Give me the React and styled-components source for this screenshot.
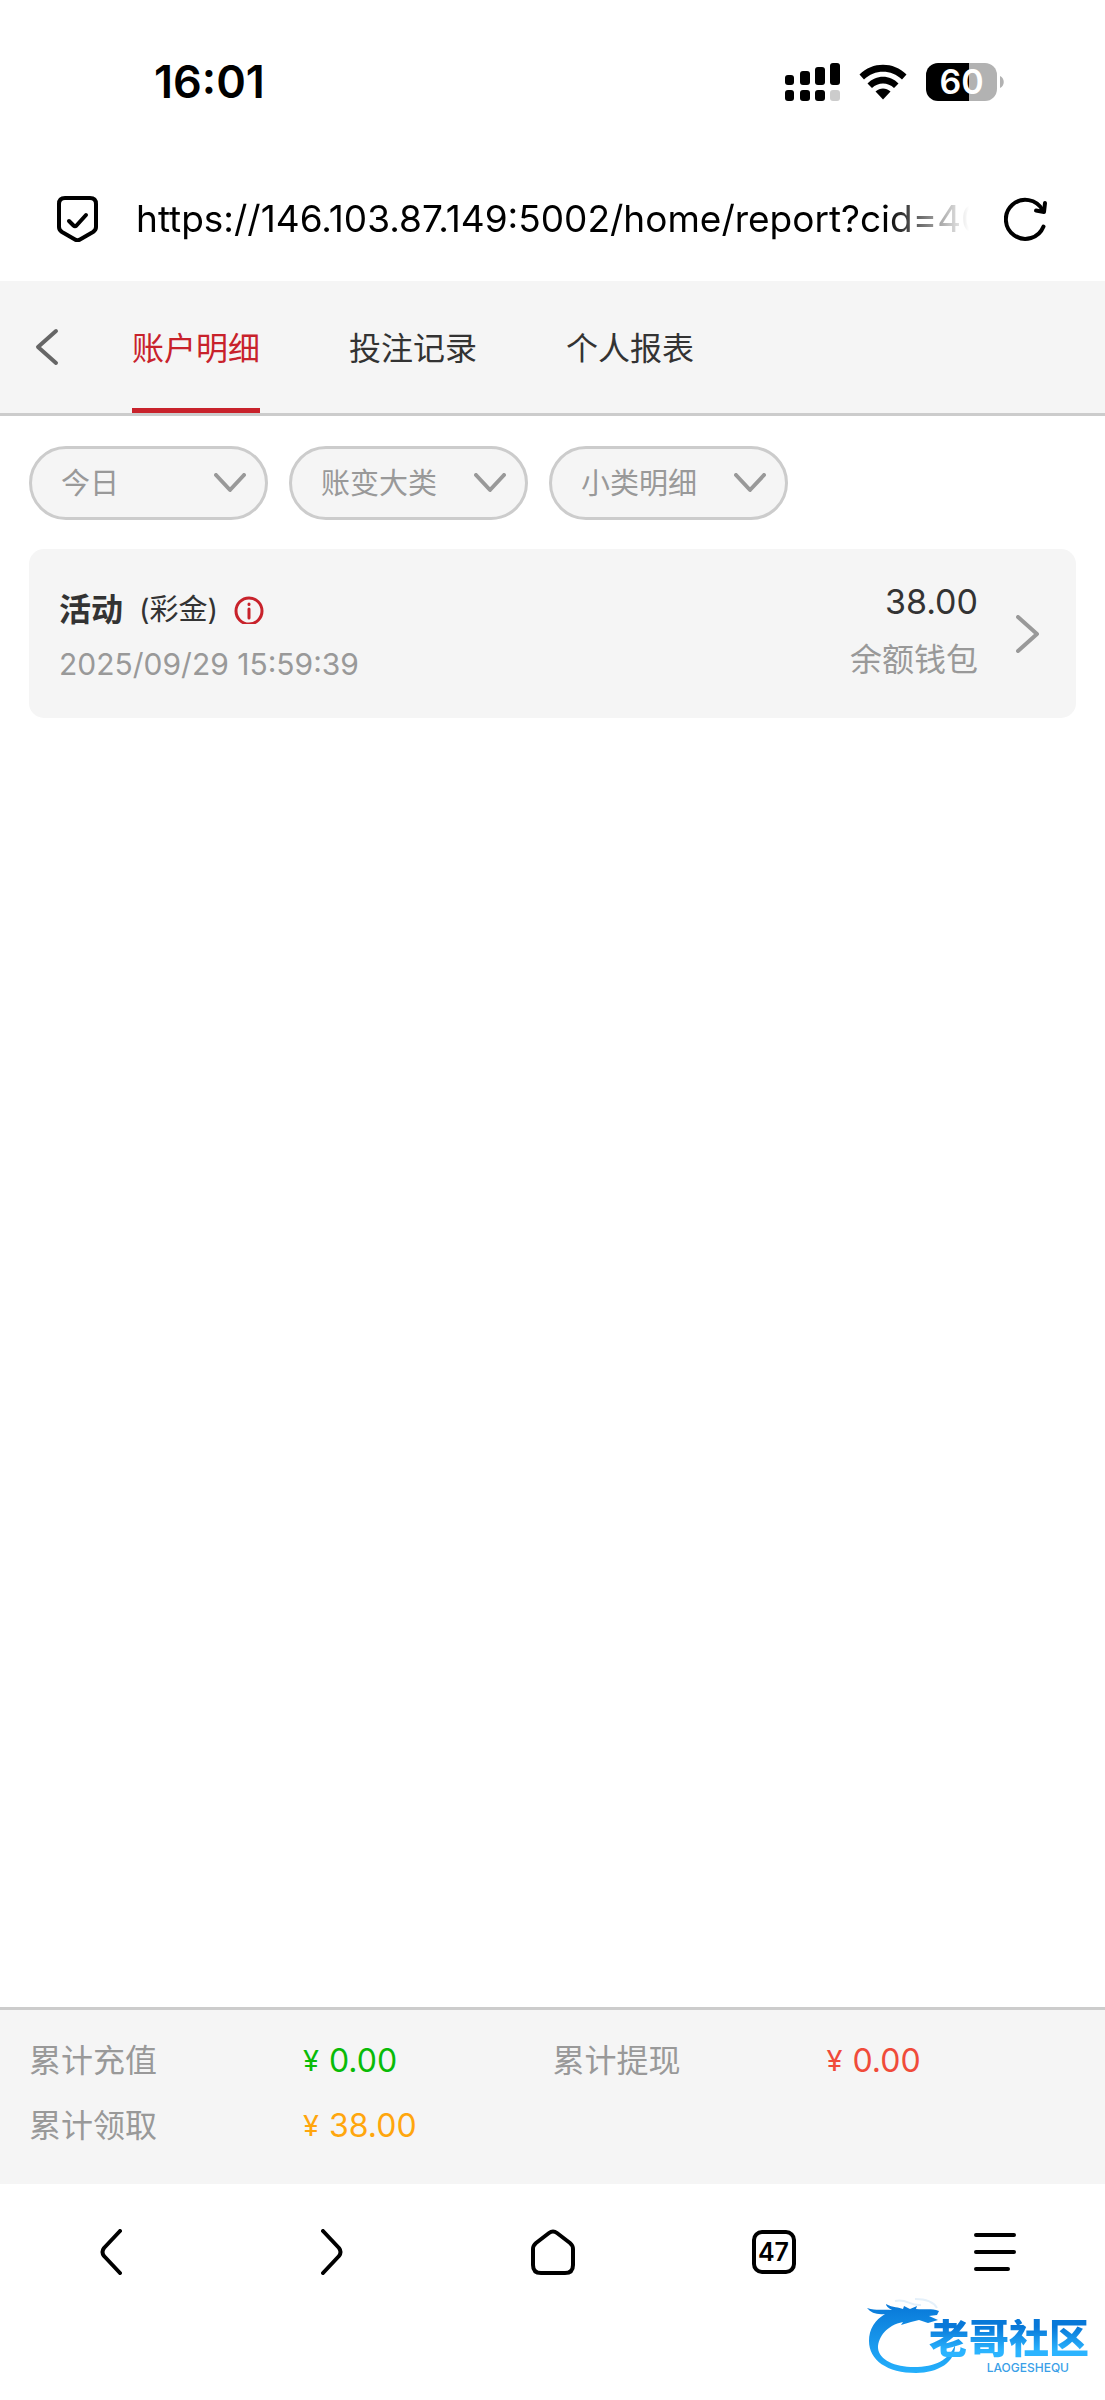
import React from 'react';
import styled, { createGlobalStyle } from 'styled-components';

const GlobalStyle = createGlobalStyle`
  * {
    box-sizing: border-box;
  }

  body {
    margin: 0;
    background: #fff;
    font-family: Inter, 'Noto Sans CJK SC', sans-serif;
  }

  button,
  input,
  select {
    font: inherit;
    color: inherit;
  }
`;

const Page = styled.div`
  display: flex;
  flex-direction: column;
  min-height: 100vh;
`;

const StatusBar = styled.div`
  display: flex;
  align-items: center;
  justify-content: space-between;
  height: 164px;
  padding: 0 101px 0 154px;
`;

const Clock = styled.time`
  font-size: 45px;
  font-weight: 600;
  line-height: 56px;
`;

const StatusIcons = styled.div`
  display: flex;
  align-items: center;
  gap: 19px;
`;

const Battery = styled.div`
  display: flex;
  align-items: center;
  gap: 3px;
`;

const BatteryBody = styled.div`
  width: 71px;
  height: 38px;
  border-radius: 12px;
  background: linear-gradient(to right, #000 60%, #b2b2b2 60%);
  color: #fff;
  font-size: 34px;
  font-weight: 600;
  line-height: 38px;
  text-align: center;
`;

const AddressBar = styled.div`
  display: flex;
  align-items: center;
  height: 109px;
  padding: 0 57px 0 56px;
  margin-bottom: 8px;
`;

const AddressInput = styled.input`
  flex: 1;
  min-width: 0;
  height: 56px;
  margin: 0 35px 0 37px;
  padding: 0;
  border: 0;
  outline: 0;
  background: none;
  color: #000;
  font-size: 37px;
  mask-image: linear-gradient(to right, #000 calc(100% - 84px), transparent);
`;

const IconButton = styled.button`
  display: flex;
  align-items: center;
  justify-content: center;
  padding: 0;
  border: 0;
  background: none;
  color: ${({ $color }) => $color || '#000'};
`;

const Header = styled.header`
  display: flex;
  height: 135px;
  padding-left: 32px;
  background: #f5f5f5;
  border-bottom: 3px solid #ccc;
`;

const Tabs = styled.nav`
  display: flex;
  gap: 89px;
  margin-left: 72px;
`;

const Tab = styled.a`
  display: flex;
  align-items: center;
  border-top: 8px solid transparent;
  border-bottom: 5px solid ${({ $active }) => ($active ? '#c8222b' : 'transparent')};
  color: ${({ $active }) => ($active ? '#c8222b' : '#333')};
  font-size: 32px;
  line-height: 48px;
  text-decoration: none;
`;

const Main = styled.main`
  flex: 1;
  padding: 30px 29px;
`;

const Filters = styled.div`
  display: flex;
  gap: 21px;
  margin-bottom: 29px;
`;

const Filter = styled.label`
  position: relative;
  display: block;
  width: 239px;
  color: #999;

  svg {
    position: absolute;
    top: 27px;
    right: 22px;
    pointer-events: none;
  }
`;

const FilterSelect = styled.select`
  appearance: none;
  width: 100%;
  height: 74px;
  padding: 0 60px 0 29px;
  border: 3px solid #ccc;
  border-radius: 37px;
  background: #f5f5f5;
  font-size: 29px;
`;

const Record = styled.article`
  display: flex;
  align-items: center;
  height: 169px;
  padding: 0 36px 0 30px;
  border-radius: 15px;
  background: #f5f5f5;
  color: #333;
`;

const RecordInfo = styled.div`
  flex: 1;
  padding-top: 4px;
`;

const RecordTitle = styled.div`
  display: flex;
  align-items: center;
  gap: 16px;
  font-size: 29px;
  line-height: 56px;

  strong {
    font-size: 32px;
    font-weight: 700;
  }
`;

const RecordTime = styled.time`
  display: block;
  color: #999;
  font-size: 30px;
  line-height: 52px;
`;

const RecordAmount = styled.div`
  margin-right: 38px;
  padding-bottom: 6px;
  text-align: right;
  font-size: 34px;
  line-height: 58px;
`;

const Wallet = styled.div`
  color: #999;
  font-size: 32px;
`;

const Totals = styled.footer`
  height: 177px;
  padding: 18px 29px;
  background: #f5f5f5;
  border-top: 3px solid #ccc;
`;

const TotalsList = styled.dl`
  display: grid;
  grid-template-columns: 1fr 1fr;
  margin: 0;
  font-size: 32px;
  line-height: 65px;
`;

const Total = styled.div`
  display: flex;

  dt {
    width: 274px;
    color: #999;
  }

  dd {
    display: flex;
    gap: 10px;
    margin: 0;
    color: ${({ $color }) => $color};
  }
`;

const Currency = styled.span`
  font-size: 29px;
`;

const BottomNav = styled.nav`
  display: grid;
  grid-template-columns: repeat(5, 1fr);
  height: 216px;
  padding-bottom: 80px;
`;

const TabCount = styled.span`
  display: block;
  width: 44px;
  height: 44px;
  border: 4px solid #000;
  border-radius: 10px;
  font-size: 25px;
  font-weight: 600;
  line-height: 36px;
  text-align: center;
`;

const Watermark = styled.div`
  position: absolute;
  right: 16px;
  bottom: 25px;
  width: 224px;
  height: 80px;
  pointer-events: none;

  svg {
    position: absolute;
    inset: 0;
  }
`;

const WatermarkName = styled.div`
  position: absolute;
  top: 24px;
  right: 0;
  background: linear-gradient(#0878d8 20%, #2bb4ff 80%);
  background-clip: text;
  color: transparent;
  font-size: 40px;
  font-weight: 900;
  line-height: 40px;
`;

const WatermarkLatin = styled.div`
  position: absolute;
  right: 20px;
  bottom: 0;
  color: #3a9fe8;
  font-size: 12px;
  font-weight: 500;
  line-height: 14px;
`;

const Stroke = ({ width, height, weight, children }) => (
  <svg
    width={width}
    height={height}
    viewBox={`0 0 ${width} ${height}`}
    fill="none"
    stroke="currentColor"
    strokeWidth={weight}
    strokeLinecap="round"
    strokeLinejoin="round"
    aria-hidden="true"
  >
    {children}
  </svg>
);

const SignalIcon = () => (
  <svg width="55" height="38" viewBox="0 0 55 38" aria-hidden="true">
    <rect x="0" y="12" width="9" height="10" rx="3" />
    <rect x="15" y="8" width="10" height="14" rx="3" />
    <rect x="30" y="4" width="10" height="18" rx="3" />
    <rect x="45" y="0" width="10" height="22" rx="3" />
    <rect x="0" y="27" width="9" height="11" rx="3" />
    <rect x="15" y="27" width="10" height="11" rx="3" />
    <rect x="30" y="27" width="10" height="11" rx="3" />
    <rect x="45" y="27" width="10" height="11" rx="3" fill="#ccc" />
  </svg>
);

const WifiIcon = () => (
  <svg width="48" height="36" viewBox="0 0 48 36" aria-hidden="true">
    <path d="M0.5 10.5C13.5 -2.5 34.5 -2.5 47.5 10.5L43 15.5C32.5 5 15.5 5 5 15.5Z" />
    <path d="M8.5 19.5C17 10.5 31 10.5 39.5 19.5L35 24C29 18 19 18 13 24Z" />
    <path d="M16.5 27.5C21 23.5 27 23.5 31.5 27.5L24 35.5Z" />
  </svg>
);

const Dragon = () => (
  <svg width="224" height="80" viewBox="0 0 224 80" aria-hidden="true">
    <defs>
      <linearGradient id="dragon" x1="0" y1="0" x2="0" y2="1">
        <stop offset="0" stopColor="#0878d8" />
        <stop offset="1" stopColor="#25b0fc" />
      </linearGradient>
    </defs>
    <path
      fill="url(#dragon)"
      d="M2 13C12 16 17 14 27 15C23 13 21 11 21 9C28 13 34 12 38 14L39 11L45 14L52 11L51 14C60 15 66 13 74 16L72 20L64 21L73 25L63 28L54 25L46 27L36 30L38 27C22 30 13 42 13 53C14 65 30 72 49 72C70 72 84 65 90 50C91 67 73 78 51 78C22 78 4 65 4 46C4 34 10 25 20 19C12 20 6 18 2 13Z"
    />
    <path
      fill="none"
      stroke="#e4f0fa"
      strokeWidth="2"
      d="M30 6C42 3 44 11 56 10M50 4C60 4 68 6 72 13"
    />
  </svg>
);

const tabs = ['账户明细', '投注记录', '个人报表'];

const filters = ['今日', '账变大类', '小类明细'];

const totals = [
  { label: '累计充值', value: '0.00', color: '#09bb07' },
  { label: '累计提现', value: '0.00', color: '#f04b3a' },
  { label: '累计领取', value: '38.00', color: '#ffa60d' },
];

const App = () => (
  <>
    <GlobalStyle />
    <Page>
      <StatusBar>
        <Clock>16:01</Clock>
        <StatusIcons>
          <SignalIcon />
          <WifiIcon />
          <Battery>
            <BatteryBody>60</BatteryBody>
            <svg width="4" height="12" viewBox="0 0 4 12" aria-hidden="true">
              <path d="M0 0C5 2 5 10 0 12Z" fill="#b2b2b2" />
            </svg>
          </Battery>
        </StatusIcons>
      </StatusBar>

      <AddressBar>
        <Stroke width={43} height={46} weight={4}>
          <path d="M9 2H34Q40 2 40 8V31Q40 34 37 36L24 43.5Q21.5 45 19 43.5L6 36Q3 34 3 31V8Q3 2 9 2Z" />
          <path d="M13 25L17.5 29.5Q19 31 20.5 29.5L30 19" />
        </Stroke>
        <AddressInput
          type="text"
          aria-label="Address"
          defaultValue="https://146.103.87.149:5002/home/report?cid=400"
        />
        <IconButton type="button" aria-label="Reload">
          <Stroke width={44} height={44} weight={4}>
            <path d="M39.5 29.5A19.5 19.5 0 1 1 38.5 13" />
            <path d="M41 6L40 15L32 13.5" />
          </Stroke>
        </IconButton>
      </AddressBar>

      <Header>
        <IconButton type="button" aria-label="Back" $color="#666">
          <Stroke width={28} height={38} weight={4}>
            <path d="M24 3L6 19L24 35" />
          </Stroke>
        </IconButton>
        <Tabs>
          {tabs.map((tab, index) => (
            <Tab key={tab} href="#" $active={index === 0}>
              {tab}
            </Tab>
          ))}
        </Tabs>
      </Header>

      <Main>
        <Filters>
          {filters.map((filter) => (
            <Filter key={filter}>
              <FilterSelect aria-label={filter}>
                <option>{filter}</option>
              </FilterSelect>
              <Stroke width={32} height={20} weight={4}>
                <path d="M2 2L16 17L30 2" />
              </Stroke>
            </Filter>
          ))}
        </Filters>

        <Record>
          <RecordInfo>
            <RecordTitle>
              <strong>活动</strong>
              <span>(彩金)</span>
              <IconButton type="button" aria-label="Info" $color="#c8222b">
                <Stroke width={30} height={28} weight={3}>
                  <circle cx="15" cy="15" r="13" />
                  <path d="M15 13V22M15 8V8.500" />
                </Stroke>
              </IconButton>
            </RecordTitle>
            <RecordTime>2025/09/29 15:59:39</RecordTime>
          </RecordInfo>
          <RecordAmount>
            38.00
            <Wallet>余额钱包</Wallet>
          </RecordAmount>
          <IconButton type="button" aria-label="Details" $color="#999">
            <Stroke width={24} height={38} weight={4}>
              <path d="M2 2L21 19L2 36" />
            </Stroke>
          </IconButton>
        </Record>
      </Main>

      <Totals>
        <TotalsList>
          {totals.map((total) => (
            <Total key={total.label} $color={total.color}>
              <dt>{total.label}</dt>
              <dd>
                <Currency>¥</Currency>
                {total.value}
              </dd>
            </Total>
          ))}
        </TotalsList>
      </Totals>

      <BottomNav>
        <IconButton type="button" aria-label="Previous page">
          <Stroke width={22} height={46} weight={4}>
            <path d="M20 2L4 19Q1 23 4 27L20 44" />
          </Stroke>
        </IconButton>
        <IconButton type="button" aria-label="Next page">
          <Stroke width={22} height={46} weight={4}>
            <path d="M2 2L18 19Q21 23 18 27L2 44" />
          </Stroke>
        </IconButton>
        <IconButton type="button" aria-label="Home">
          <Stroke width={44} height={46} weight={4}>
            <path d="M5 14L18 4Q22 1 26 4L39 14Q42 16.5 42 20V36Q42 44 34 44H10Q2 44 2 36V20Q2 16.5 5 14Z" />
          </Stroke>
        </IconButton>
        <IconButton type="button" aria-label="Open tabs">
          <TabCount>47</TabCount>
        </IconButton>
        <IconButton type="button" aria-label="Menu">
          <Stroke width={42} height={40} weight={4}>
            <path d="M2 3H40M2 20H40M2 37H34" />
          </Stroke>
        </IconButton>
      </BottomNav>
      <Watermark>
        <Dragon />
        <WatermarkName>老哥社区</WatermarkName>
        <WatermarkLatin>LAOGESHEQU</WatermarkLatin>
      </Watermark>
    </Page>
  </>
);

export default App;
